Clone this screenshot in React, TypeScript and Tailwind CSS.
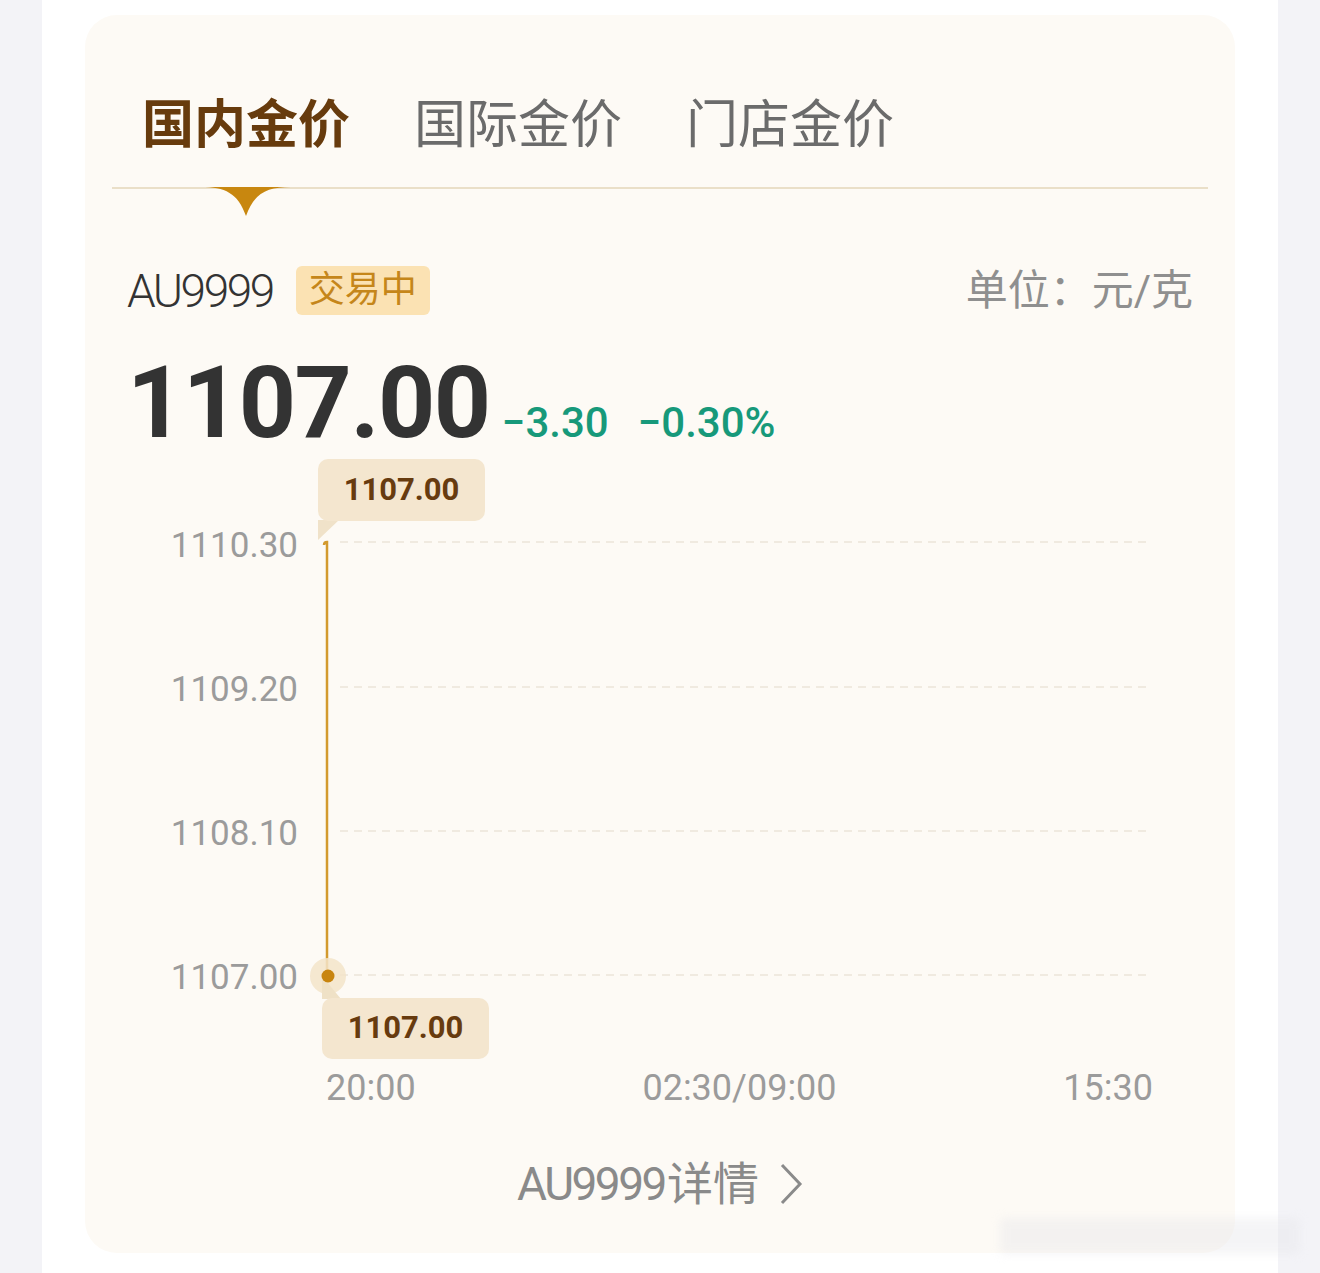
import React from "react";

const F = "font-['Roboto','Noto_Sans_CJK_SC',sans-serif]";

export default function App() {
  const yLabels = [
    { t: "1110.30", c: 92 },
    { t: "1109.20", c: 236 },
    { t: "1108.10", c: 380 },
    { t: "1107.00", c: 524 },
  ];
  const grid = [88, 233, 377, 521];
  return (
    <div className={`relative flex w-[1320px] h-[1273px] bg-[#f3f3f7] overflow-hidden ${F}`}>
      <div className="ml-[42px] w-[1236px] h-full bg-white pt-[15px] pl-[43px]">
        <div className="w-[1150px] h-[1238px] rounded-[32px] bg-[#fdfaf5] flex flex-col">
          {/* Tabs */}
          <div className="px-[27px]">
            <div className="relative flex gap-[64px] pl-[30px] pt-[73px] pb-[23px] border-b-2 border-[#eadfc8]">
              <span className="text-[52px] leading-[76px] font-bold text-[#673b0d]">国内金价</span>
              <span className="text-[52px] leading-[76px] text-[#6b6b6b]">国际金价</span>
              <span className="text-[52px] leading-[76px] text-[#6b6b6b]">门店金价</span>
              <svg
                className="absolute left-[89px] top-full"
                width="90"
                height="30"
                viewBox="0 0 90 30"
              >
                <path d="M0 0 C24 0 37 6 45 29 C53 6 66 0 90 0 Z" fill="#c8870f" />
              </svg>
            </div>
          </div>

          <div className="px-[42px] flex flex-col">
            {/* Symbol row */}
            <div className="mt-[77px] h-[49px] flex items-center justify-between">
              <div className="flex items-center">
                <span className="text-[46px] leading-none font-light tracking-[-2.5px] text-[#333333]">
                  AU9999
                </span>
                <span className="ml-[23px] h-[49px] px-[13px] rounded-[6px] bg-[#fbe2b3] text-[36px] leading-[49px] text-[#c5861a]">
                  交易中
                </span>
              </div>
              <span className="text-[42px] leading-[49px] text-[#8f8f8f]">单位：元/克</span>
            </div>

            {/* Price row */}
            <div className="mt-[38px] flex items-baseline">
              <span className="text-[100px] leading-[100px] font-bold tracking-[-1.5px] text-[#333333]">
                1107.00
              </span>
              <span className="ml-[12px] text-[42px] font-medium text-[#17997a]">−3.30</span>
              <span className="ml-[29px] text-[42px] font-medium text-[#17997a]">−0.30%</span>
            </div>

            {/* Chart */}
            <div className="relative h-[660px] w-[1066px]">
              <svg className="absolute left-0 top-0" width="1066" height="660" viewBox="0 0 1066 660">
                {grid.map((y) => (
                  <line
                    key={y}
                    x1="213"
                    x2="1021"
                    y1={y}
                    y2={y}
                    stroke="#ece5d9"
                    strokeWidth="1.5"
                    strokeDasharray="8 6"
                  />
                ))}
                <polygon points="191,66 212,66 191,86" fill="#f0e2c9" />
                <path d="M197 91 Q197 88 200 88 L200 521" stroke="#d39a2e" strokeWidth="2.5" fill="none" />
                <circle cx="201" cy="522" r="18" fill="#f3e4c9" opacity="0.85" />
                <polygon points="195,522 195,545 214,545" fill="#efe1c6" />
                <circle cx="201" cy="522" r="6.5" fill="#c8850f" />
              </svg>

              {yLabels.map((l) => (
                <div
                  key={l.t}
                  className="absolute left-0 w-[171px] h-[36px] text-right text-[35px] leading-[36px] text-[#9b9b9b]"
                  style={{ top: l.c - 18 }}
                >
                  {l.t}
                </div>
              ))}

              <div className="absolute left-[191px] top-[5px] w-[167px] h-[62px] rounded-[10px] bg-[#f4e6cf] flex items-center justify-center text-[31px] font-bold text-[#673b0f]">
                1107.00
              </div>
              <div className="absolute left-[195px] top-[544px] w-[167px] h-[61px] rounded-[10px] bg-[#f4e6cf] flex items-center justify-center text-[31px] font-bold text-[#673b0f]">
                1107.00
              </div>

              <div className="absolute left-[199px] top-[616px] w-[827px] flex justify-between text-[36px] leading-[36px] text-[#9b9b9b]">
                <span>20:00</span>
                <span>02:30/09:00</span>
                <span>15:30</span>
              </div>
            </div>

            {/* Footer link */}
            <div className="mt-[47px] flex items-center justify-center text-[#8a8a8a]">
              <span className="text-[46px] leading-[46px]">
                <span className="tracking-[-2.5px]">AU9999</span>
                <span className="ml-[2px]">详情</span>
              </span>
              <svg className="ml-[20px]" width="24" height="44" viewBox="0 0 24 44">
                <polyline points="3,3 21,22 3,41" fill="none" stroke="#8a8a8a" strokeWidth="3" />
              </svg>
            </div>
          </div>
        </div>
      </div>
      <div className="absolute left-[1000px] top-[1218px] w-[300px] h-[36px] rounded-[4px] bg-[#e6e6ea] opacity-40 blur-[5px]" />
    </div>
  );
}
